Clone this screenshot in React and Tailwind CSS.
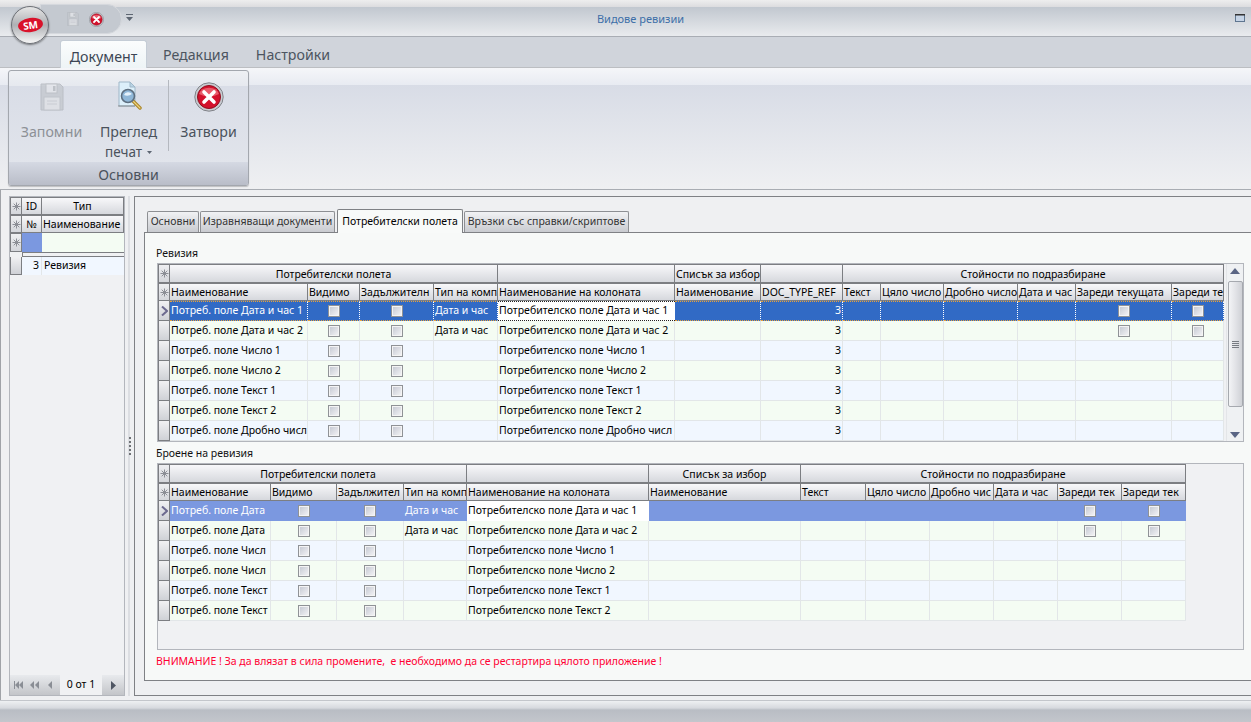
import React from "react";

const ui = "[font-family:'DejaVu_Sans_Condensed','DejaVu_Sans',sans-serif]";
const rib = "[font-family:'Noto_Sans','Open_Sans',sans-serif]";

function Star() {
  return (
    <svg width="9" height="9" viewBox="0 0 9 9" stroke="#8c8f96" strokeWidth="1" fill="none">
      <path d="M4.5 0.5V8.5M0.5 4.5H8.5M1.7 1.7L7.3 7.3M7.3 1.7L1.7 7.3" />
    </svg>
  );
}

function Disk({ w = 24, h = 28, op = 1 }) {
  return (
    <svg width={w} height={h} viewBox="0 0 24 28" style={{ opacity: op }}>
      <path d="M1 1H20L23 4V27H1Z" fill="#c3c7cd" stroke="#b0b4bb" />
      <rect x="6" y="1" width="11" height="9" fill="#e4e6ea" stroke="#b4b8bd" />
      <rect x="13" y="3" width="2.5" height="5" fill="#b4b8bd" />
      <rect x="4" y="14" width="16" height="13" fill="#dfe1e5" stroke="#b8bbc1" />
      <path d="M7 18H17M7 21H17" stroke="#c4c7cc" />
    </svg>
  );
}

function CloseIcon({ size = 30 }) {
  return (
    <svg width={size} height={size} viewBox="0 0 30 30">
      <circle cx="15" cy="15" r="14.2" fill="#c9ccd1" stroke="#7f8288" />
      <circle cx="15" cy="15" r="11.5" fill="#d3112c" stroke="#8e1020" />
      <path d="M5 12A10.5 9 0 0 1 25 12Q15 17 5 12Z" fill="#f0737f" opacity=".75" />
      <path d="M10 10L20 20M20 10L10 20" stroke="#fff" strokeWidth="3.6" strokeLinecap="round" />
    </svg>
  );
}

function PreviewIcon() {
  return (
    <svg width="26" height="30" viewBox="0 0 26 30">
      <path d="M3 1H14L19 6V25H3Z" fill="#dceffa" stroke="#9fb7c8" />
      <path d="M14 1V6H19Z" fill="#b9d4e6" stroke="#9fb7c8" />
      <path d="M2 25H19" stroke="#777" strokeWidth="1.5" opacity=".5" />
      <path d="M16 19L24 27" stroke="#a98324" strokeWidth="3.4" strokeLinecap="round" />
      <path d="M17 20L24 27" stroke="#ecd27d" strokeWidth="1.2" strokeLinecap="round" />
      <circle cx="12" cy="15" r="6.5" fill="#8fb7d8" stroke="#5e6f80" strokeWidth="1.6" />
      <path d="M8 14A4.5 4 0 0 1 16 13Q12 16 8 14Z" fill="#e4f1fb" />
    </svg>
  );
}

function Logo() {
  return (
    <div className="absolute left-[11px] top-[6px] w-[38px] h-[38px] rounded-full border border-[#6d7076] bg-gradient-to-b from-[#e6e6e6] via-[#aeb0b4] to-[#f6f6f6] flex items-center justify-center shadow-[0_1px_2px_rgba(0,0,0,0.45)]">
      <div className="w-[25px] h-[14px] rounded-[50%] bg-[#d9122a] rotate-[-8deg] flex items-center justify-center text-white text-[10px] font-bold leading-none [font-family:'Liberation_Sans',sans-serif]">
        SM
      </div>
    </div>
  );
}

function Check() {
  return (
    <div className="w-[12px] h-[12px] border border-[#8f9296] bg-gradient-to-br from-[#c2c6d0] to-[#f6f6f8] shadow-[inset_0_0_0_1px_#f4f4f4]" />
  );
}

const headCell =
  "h-full min-w-0 overflow-hidden whitespace-nowrap border-r border-b border-t border-[#7c7e82] bg-gradient-to-b from-[#f8f8fa] to-[#d6d8dd] text-[10.5px] leading-[16px] text-black flex items-center";

function Indicator({ kind }) {
  if (kind === "star")
    return (
      <div className="h-full border-l border-r border-b border-t border-[#7c7e82] bg-gradient-to-b from-[#eeeff1] to-[#d4d6db] flex items-center justify-center">
        <Star />
      </div>
    );
  return (
    <div className="h-full border-l border-r border-b border-[#7c7e82] bg-gradient-to-b from-[#f1f1f3] to-[#cfd1d6] flex items-center justify-center">
      {kind === "arrow" && (
        <svg width="7" height="10" viewBox="0 0 7 10">
          <path d="M1 0.5L6 5L1 9.5" fill="none" stroke="#6d6a8f" strokeWidth="2" />
        </svg>
      )}
    </div>
  );
}

function DataRow({ row, index, aligns, focusCol, selected, dotted }) {
  const isSel = index === 0;
  return (
    <>
      <Indicator kind={isSel ? "arrow" : "none"} />
      {row.map((c, i) => {
        const focus = isSel && i === focusCol;
        let bg = index % 2 === 1 ? "bg-[#f4fcf3]" : "bg-[#f1f7ff]";
        let color = "text-black";
        if (isSel && !focus) {
          bg = selected;
          color = "text-white";
        }
        if (focus) bg = "bg-white";
        const border = isSel
          ? dotted
            ? focus
              ? "border-y border-dotted border-[#222]"
              : "border-y border-r border-dotted border-y-[#e8a23c] border-r-white"
            : "border-r border-b border-transparent"
          : "border-r border-b border-[#e2e6e8]";
        const align =
          c === true
            ? "justify-center"
            : aligns[i] === "r"
              ? "justify-end pr-[1px]"
              : "pl-[1px]";
        return (
          <div
            key={i}
            className={`h-full min-w-0 overflow-hidden whitespace-nowrap flex items-center text-[10.5px] ${bg} ${color} ${border} ${align}`}
          >
            {c === true ? <Check /> : c}
          </div>
        );
      })}
    </>
  );
}

const top = [
  "Потреб. поле Дата и час 1|Дата и час|Потребителско поле Дата и час 1|c",
  "Потреб. поле Дата и час 2|Дата и час|Потребителско поле Дата и час 2|c",
  "Потреб. поле Число 1||Потребителско поле Число 1|",
  "Потреб. поле Число 2||Потребителско поле Число 2|",
  "Потреб. поле Текст 1||Потребителско поле Текст 1|",
  "Потреб. поле Текст 2||Потребителско поле Текст 2|",
  "Потреб. поле Дробно числ||Потребителско поле Дробно числ|",
  "|||",
].map((s) => s.split("|"));

const topRows = top.map(([a, t, n, c], i) =>
  i === 7
    ? ["", "", "", "", "", "", "", "", "", "", "", "", ""]
    : [a, true, true, t, n, "", "3", "", "", "", "", c ? true : "", c ? true : ""]
);

const bottomRows = top.slice(0, 6).map(([a, t, n, c]) => [
  a.replace(/^(Потреб\. поле (Дата|Числ|Текст)).*$/, "$1"),
  true,
  true,
  t,
  n,
  "",
  "",
  "",
  "",
  "",
  c ? true : "",
  c ? true : "",
]);

const topHeads = [
  "Наименование", "Видимо", "Задължителн", "Тип на комп", "Наименование на колоната",
  "Наименование", "DOC_TYPE_REF", "Текст", "Цяло число", "Дробно число", "Дата и час",
  "Зареди текущата", "Зареди те",
];
const bottomHeads = [
  "Наименование", "Видимо", "Задължител", "Тип на комп", "Наименование на колоната",
  "Наименование", "Текст", "Цяло число", "Дробно чис", "Дата и час", "Зареди тек", "Зареди тек",
];

function Band({ span, children, left }) {
  return (
    <div className={`${span} ${headCell} ${left ? "justify-start pl-[1px]" : "justify-center"}`}>{children}</div>
  );
}

function Heads({ items }) {
  return items.map((h, i) => (
    <div key={i} className={`${headCell} pl-[1px]`}>
      {h}
    </div>
  ));
}

function Scrollbar() {
  return (
    <div className="w-[17px] ml-auto h-full bg-[#eff1f3] border-l border-[#e3e5e8] flex flex-col items-center">
      <svg width="10" height="6" viewBox="0 0 10 6" className="mt-[4px] shrink-0">
        <path d="M5 0L10 6H0Z" fill="#5a6584" />
      </svg>
      <div className="mt-[7px] w-[15px] h-[126px] border border-[#a6a9af] rounded-[2px] bg-gradient-to-r from-[#f3f4f6] via-[#e2e3e7] to-[#cfd1d6] flex flex-col items-center justify-center gap-[1px]">
        <div className="w-[7px] h-px bg-[#777b82]" />
        <div className="w-[7px] h-px bg-[#777b82]" />
        <div className="w-[7px] h-px bg-[#777b82]" />
        <div className="w-[7px] h-px bg-[#777b82]" />
      </div>
      <svg width="10" height="6" viewBox="0 0 10 6" className="mt-[25px] shrink-0">
        <path d="M5 6L10 0H0Z" fill="#5a6584" />
      </svg>
    </div>
  );
}

function Nav({ d }) {
  return (
    <svg width="11" height="10" viewBox="0 0 11 10" className="shrink-0">
      <path d={d} fill="#8a8e95" />
    </svg>
  );
}

export default function App() {
  return (
    <div className={`w-[1251px] h-[722px] overflow-hidden flex flex-col bg-[#eff0f2] ${ui} relative`}>
      {/* Title bar */}
      <div className="h-[37px] shrink-0 relative border-b border-[#a9adb4] bg-gradient-to-b from-[#b8bfc8] to-[#e9ebee] flex items-center justify-center">
        <div className="absolute inset-x-0 top-0 h-[7px] bg-gradient-to-b from-[#eeeeee] to-[#dcdcdf]" />
        <div className="absolute left-[40px] top-[4px] w-[82px] h-[30px] rounded-r-[15px] bg-[#c4c9d0] border border-[#d5d8dd] flex items-center">
          <div className="ml-[26px]">
            <Disk w={12} h={14} op={0.8} />
          </div>
          <div className="ml-[10px]">
            <CloseIcon size={15} />
          </div>
        </div>
        <svg width="7" height="8" viewBox="0 0 7 8" className="absolute left-[126px] top-[14px]">
          <path d="M0 0H7V1H0ZM0 3H7L3.5 7Z" fill="#5d6672" />
        </svg>
        <Logo />
        <span className="relative left-[15px] top-px text-[11px] text-[#3d6fa8]">Видове ревизии</span>
        <svg width="10" height="8" viewBox="0 0 10 8" className="absolute left-[1235px] top-[14px]">
          <rect x=".5" y=".5" width="9" height="7" fill="#c6d4e6" stroke="#5f7690" />
          <rect width="10" height="1.5" fill="#333" />
        </svg>
      </div>

      {/* Tabs */}
      <div className={`h-[31px] shrink-0 bg-[#d0d4db] border-b border-[#bcbec2] flex items-end pl-[60px] text-[14.2px] ${rib}`}>
        <div className="w-[87px] h-[28px] mb-[-1px] pt-[4px] rounded-t-[3px] border border-b-0 border-[#c5cdd6] bg-gradient-to-b from-[#fbfdfd] to-[#eef4f6] flex items-center justify-center text-[#3c4654] z-10">
          Документ
        </div>
        <div className="ml-[16px] h-[28px] pt-[4px] flex items-center text-[#4c5560]">Редакция</div>
        <div className="ml-[27px] h-[28px] pt-[4px] flex items-center text-[#4c5560]">Настройки</div>
      </div>

      {/* Ribbon */}
      <div className={`h-[122px] shrink-0 border-b border-[#a9adb3] bg-[linear-gradient(#f5f6f9_0,#e8ebf2_17px,#d8dce6_17px,#eff0f2_100%)] pl-[8px] pt-[2px] ${rib}`}>
        <div className="w-[241px] h-[116px] rounded-[3px] border border-[#a3a7ae] bg-[linear-gradient(#eef0f4_0,#e6e9ef_15px,#d9dde7_15px,#e3e6ec_100%)] flex flex-col overflow-hidden shadow-[0_1px_1px_rgba(0,0,0,0.2)]">
          <div className="h-[92px] flex">
            <div className="w-[85px] flex flex-col items-center pt-[12px]">
              <Disk op={0.75} />
              <span className="mt-[11px] text-[14.2px] leading-[20px] text-[#8c9096]">Запомни</span>
            </div>
            <div className="w-[69px] flex flex-col items-center pt-[10px]">
              <PreviewIcon />
              <span className="mt-[11px] text-[14.2px] leading-[20px] text-[#4a525c]">Преглед</span>
              <span className="text-[13.5px] leading-[20px] text-[#4a525c] flex items-center gap-[5px]">
                печат
                <svg width="5" height="3" viewBox="0 0 5 3">
                  <path d="M0 0H5L2.5 3Z" fill="#5d6672" />
                </svg>
              </span>
            </div>
            <div className="w-px h-[71px] mt-[9px] ml-[5px] bg-[#b4b8bf]" />
            <div className="flex-1 flex flex-col items-center pt-[11px]">
              <CloseIcon />
              <span className="mt-[10px] text-[14.2px] leading-[20px] text-[#4a525c]">Затвори</span>
            </div>
          </div>
          <div className="flex-1 pt-[2px] bg-gradient-to-b from-[#d5d9e3] to-[#b9bdc8] flex items-center justify-center text-[14.2px] text-[#4a525c]">
            Основни
          </div>
        </div>
      </div>

      {/* Body */}
      <div className="flex-1 min-h-0 flex pt-[6px] pl-[9px] shadow-[inset_1px_0_0_#a0a3a8]">
        {/* Left panel */}
        <div className="w-[116px] h-[500px] shrink-0 border border-[#b3b6bc] bg-[#f0f1f3] flex flex-col">
          <div className="grid grid-cols-[12px_20px_1fr] grid-rows-[18px_18px_19px]">
            <Indicator kind="star" />
            <div className={`${headCell} justify-center`}>ID</div>
            <div className={`${headCell} justify-center`}>Тип</div>
            <Indicator kind="star" />
            <div className={`${headCell} justify-center`}>№</div>
            <div className={`${headCell} pl-[1px]`}>Наименование</div>
            <Indicator kind="star" />
            <div className="bg-[#7b98e0]" />
            <div className="bg-[#f4fcf3]" />
          </div>
          <div className="h-[5px] ml-[12px] border-y border-l border-[#7c7e82] bg-[#f0f1f3]" />
          <div className="grid grid-cols-[12px_20px_1fr] grid-rows-[18px]">
            <Indicator kind="none" />
            <div className="bg-[#f1f7ff] flex items-center justify-end pr-[2px] text-[10.5px] border-r border-[#e2e6e8]">3</div>
            <div className="bg-[#f1f7ff] flex items-center pl-[2px] text-[10.5px]">Ревизия</div>
          </div>
          <div className="flex-1" />
          <div className="h-[20px] bg-gradient-to-b from-[#e8eaed] to-[#c3c5c9] flex items-center">
            <div className="w-[50px] flex items-center pl-[3px] gap-[5px]">
              <Nav d="M1 1H2V9H1ZM6 1V9L2 5ZM10 1V9L6 5Z" />
              <Nav d="M5 1V9L1 5ZM10 1V9L6 5Z" />
              <Nav d="M7 1V9L3 5Z" />
            </div>
            <div className="w-[42px] h-full bg-[#f0f1f3] flex items-center justify-center text-[10.5px]">0 от 1</div>
            <div className="flex-1 flex items-center justify-center">
              <svg width="6" height="9" viewBox="0 0 6 9">
                <path d="M1 0L6 4.5L1 9Z" fill="#4f5663" />
              </svg>
            </div>
          </div>
        </div>

        {/* Splitter */}
        <div className="w-[9px] h-[500px] shrink-0 relative">
          <div className="absolute left-[3px] top-0 bottom-0 w-[2px] bg-[#dcdee2]" />
          <div className="absolute left-[4px] top-[241px] flex flex-col gap-[2px]">
            {[0, 1, 2, 3, 4].map((i) => (
              <div key={i} className="w-[2px] h-[2px] bg-[#6f7276]" />
            ))}
          </div>
        </div>

        {/* Right panel */}
        <div className="flex-1 h-[500px] border-l border-t border-b border-[#7f8185] bg-[#eff0f2] pl-[9px] pt-[12px]">
          {/* Inner tabs */}
          <div className="h-[23px] flex items-end text-[10.5px] pl-[3px] whitespace-nowrap">
            <div className="w-[52px] h-[21px] rounded-t-[2px] border border-b-0 border-[#8d8f93] bg-gradient-to-b from-[#f1f2f4] to-[#c9cbd0] flex items-center justify-center text-[#333]">Основни</div>
            <div className="ml-[1px] w-[135px] h-[21px] rounded-t-[2px] border border-b-0 border-[#8d8f93] bg-gradient-to-b from-[#f1f2f4] to-[#c9cbd0] flex items-center justify-center text-[#333]">Изравняващи документи</div>
            <div className="ml-[2px] w-[126px] h-[24px] mb-[-1px] z-10 rounded-t-[2px] border border-b-0 border-[#7f8185] bg-[#f8faf9] flex items-center justify-center text-black">Потребителски полета</div>
            <div className="ml-[1px] w-[165px] h-[21px] rounded-t-[2px] border border-b-0 border-[#8d8f93] bg-gradient-to-b from-[#f1f2f4] to-[#c9cbd0] flex items-center justify-center text-[#333]">Връзки със справки/скриптове</div>
          </div>

          {/* Pane */}
          <div className="h-[449px] border-l border-t border-b border-[#7f8185] bg-[#f7f9f8] pl-[12px] pt-[13px]">
            <div className="h-[17px] -ml-px text-[10.5px] leading-[14px] text-[#111]">Ревизия</div>
            <div className="w-[1087px] h-[179px] border border-[#b3b6bc] bg-[#f0f1f3] flex overflow-hidden">
              <div className="w-[1068px] overflow-hidden shrink-0">
                <div className="grid grid-cols-[12px_138px_52px_74px_64px_177px_86px_82px_38px_63px_74px_58px_96px_52px] auto-rows-[20px] [grid-template-rows:19px_18px]">
                  <Indicator kind="star" />
                  <Band span="col-span-4">Потребителски полета</Band>
                  <Band span="col-span-1" />
                  <Band span="col-span-1" left>Списък за избор</Band>
                  <Band span="col-span-1" />
                  <Band span="col-span-6">Стойности по подразбиране</Band>
                  <Indicator kind="star" />
                  <Heads items={topHeads} />
                  {topRows.map((r, i) => (
                    <DataRow
                      key={i}
                      row={r}
                      index={i}
                      aligns={["l", "l", "l", "l", "l", "l", "r"]}
                      focusCol={4}
                      selected="bg-[#316ac5]"
                      dotted
                    />
                  ))}
                </div>
              </div>
              <Scrollbar />
            </div>

            <div className="h-[21px] -ml-px pt-[4px] text-[10.5px] leading-[14px] text-[#111]">Броене на ревизия</div>
            <div className="w-[1087px] h-[187px] border border-[#b3b6bc] bg-[#f0f1f3] overflow-hidden">
              <div className="w-[1029px] grid grid-cols-[12px_101px_66px_67px_63px_182px_152px_65px_64px_64px_64px_64px_64px] auto-rows-[20px] [grid-template-rows:19px_18px]">
                <Indicator kind="star" />
                <Band span="col-span-4">Потребителски полета</Band>
                <Band span="col-span-1" />
                <Band span="col-span-1">Списък за избор</Band>
                <Band span="col-span-6">Стойности по подразбиране</Band>
                <Indicator kind="star" />
                <Heads items={bottomHeads} />
                {bottomRows.map((r, i) => (
                  <DataRow
                    key={i}
                    row={r}
                    index={i}
                    aligns={[]}
                    focusCol={4}
                    selected="bg-[#7b98e0]"
                    dotted={false}
                  />
                ))}
              </div>
            </div>
            <div className="mt-[3px] -ml-px text-[10.5px] leading-[16px] text-[#ff0033] whitespace-pre">
              {"ВНИМАНИЕ ! За да влязат в сила промените,  е необходимо да се рестартира цялото приложение !"}
            </div>
          </div>
        </div>
      </div>

      {/* Status */}
      <div className="h-[22px] shrink-0 border-t border-[#c3c6cb] bg-[linear-gradient(#eef0f2_0,#d6d9de_7px,#b9bdc4_9px,#c3c6cc_100%)]" />
    </div>
  );
}
